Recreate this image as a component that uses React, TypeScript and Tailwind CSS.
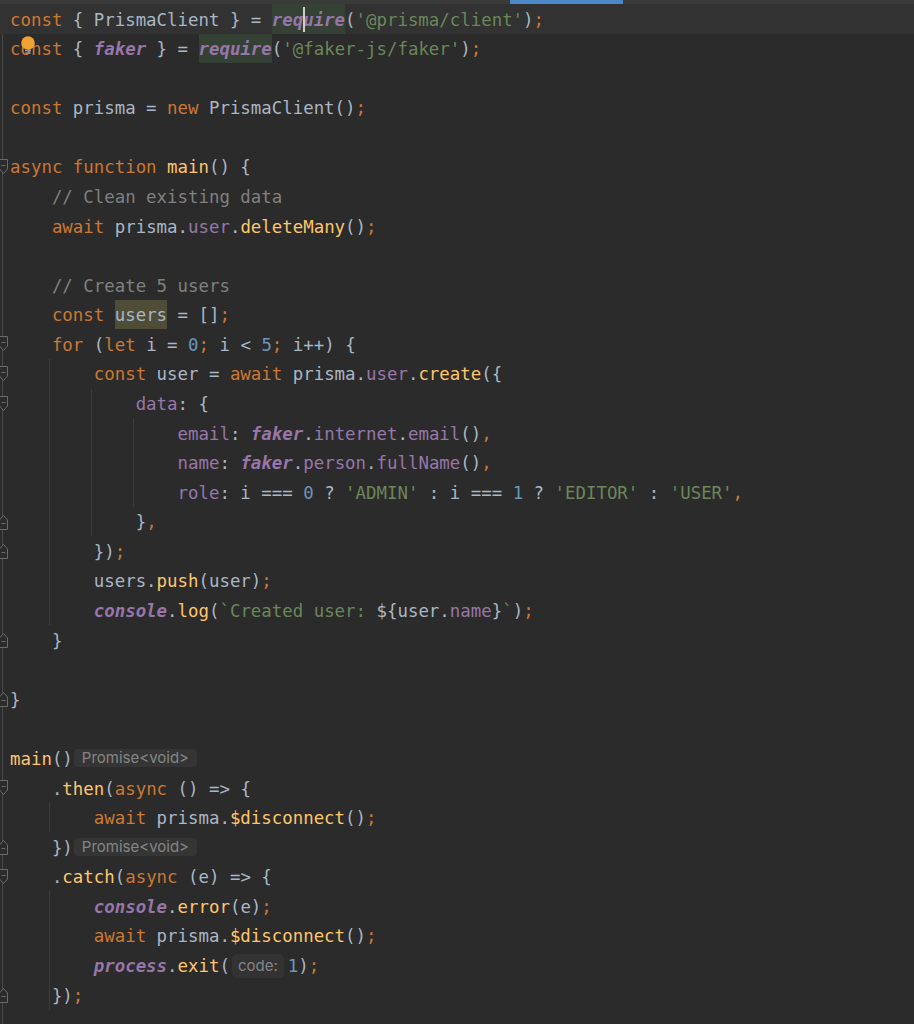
import React from "react";

type Tok = [string, string];

const K = "text-[#cc7832]";
const D = "text-[#a9b7c6]";
const S = "text-[#6a8759]";
const N = "text-[#6897bb]";
const P = "text-[#9876aa]";
const F = "text-[#ffc66d]";
const C = "text-[#808080]";
const PI = "text-[#9876aa] italic font-bold";
const REQ = "REQ";
const USR = "USR";
const HINT = "HINT";
const HINT2 = "HINT2";

const lines: Tok[][] = [
  [[ "const", K ], [" { PrismaClient } = ", D], ["require", REQ], ["(", D], ["'@prisma/client'", S], [")", D], [";", K]],
  [[ "const", K ], [" { ", D], ["faker", PI], [" } = ", D], ["require", REQ], ["(", D], ["'@faker-js/faker'", S], [")", D], [";", K]],
  [],
  [[ "const", K ], [" prisma = ", D], ["new", K], [" PrismaClient()", D], [";", K]],
  [],
  [["async function ", K], ["main", F], ["() {", D]],
  [["    // Clean existing data", C]],
  [["    ", D], ["await", K], [" prisma.", D], ["user", P], [".", D], ["deleteMany", F], ["()", D], [";", K]],
  [],
  [["    // Create 5 users", C]],
  [["    ", D], ["const", K], [" ", D], ["users", USR], [" = []", D], [";", K]],
  [["    ", D], ["for", K], [" (", D], ["let", K], [" i = ", D], ["0", N], [";", K], [" i < ", D], ["5", N], [";", K], [" i++) {", D]],
  [["        ", D], ["const", K], [" user = ", D], ["await", K], [" prisma.", D], ["user", P], [".", D], ["create", F], ["({", D]],
  [["            ", D], ["data", P], [": {", D]],
  [["                ", D], ["email", P], [": ", D], ["faker", PI], [".", D], ["internet", P], [".", D], ["email", P], ["()", D], [",", K]],
  [["                ", D], ["name", P], [": ", D], ["faker", PI], [".", D], ["person", P], [".", D], ["fullName", P], ["()", D], [",", K]],
  [["                ", D], ["role", P], [": i === ", D], ["0", N], [" ? ", D], ["'ADMIN'", S], [" : i === ", D], ["1", N], [" ? ", D], ["'EDITOR'", S], [" : ", D], ["'USER'", S], [",", K]],
  [["            }", D], [",", K]],
  [["        })", D], [";", K]],
  [["        users.", D], ["push", F], ["(user)", D], [";", K]],
  [["        ", D], ["console", PI], [".", D], ["log", F], ["(", D], ["`Created user: ", S], ["${user.", D], ["name", P], ["}", D], ["`", S], [")", D], [";", K]],
  [["    }", D]],
  [],
  [["}", D]],
  [],
  [["main", F], ["()", D], ["Promise<void>", HINT]],
  [["    .", D], ["then", F], ["(", D], ["async", K], [" () => {", D]],
  [["        ", D], ["await", K], [" prisma.", D], ["$disconnect", F], ["()", D], [";", K]],
  [["    })", D], ["Promise<void>", HINT]],
  [["    .", D], ["catch", F], ["(", D], ["async", K], [" (e) => {", D]],
  [["        ", D], ["console", PI], [".", D], ["error", F], ["(e)", D], [";", K]],
  [["        ", D], ["await", K], [" prisma.", D], ["$disconnect", F], ["()", D], [";", K]],
  [["        ", D], ["process", PI], [".", D], ["exit", F], ["(", D], ["code:", HINT2], ["1", N], [")", D], [";", K]],
  [["    })", D], [";", K]],
];

const openFold = new Set([6, 12, 13, 14, 27, 30]);
const closeFold = new Set([18, 19, 22, 24, 29, 34]);

function guidesFor(n: number): number[] {
  const g: number[] = [];
  if ((n >= 13 && n <= 21) || n === 28 || (n >= 31 && n <= 34)) g.push(49);
  if (n >= 14 && n <= 18) g.push(91);
  if (n >= 15 && n <= 17) g.push(133);
  return g;
}

function Token({ t }: { t: Tok }) {
  const [text, cls] = t;
  if (cls === REQ) {
    return (
      <span className="inline-block bg-[#344134] text-[#9876aa] italic font-bold">
        <span className="relative top-[1.5px]">{text}</span>
      </span>
    );
  }
  if (cls === USR) {
    return (
      <span className="inline-block bg-[#4f4c38] text-[#a9b7c6]">
        <span className="relative top-[1.5px]">{text}</span>
      </span>
    );
  }
  if (cls === HINT) {
    return (
      <span className="inline-block align-middle ml-[1px] h-[18px] leading-[18px] px-[8px] rounded-[4px] bg-[#353535] text-[#858585] text-[15px] font-['Inter',sans-serif]">
        {text}
      </span>
    );
  }
  if (cls === HINT2) {
    return (
      <span className="inline-block align-middle ml-[2px] mr-[4px] h-[24px] leading-[24px] px-[6px] rounded-[5px] bg-[#333333] text-[#858585] text-[15px] font-['Inter',sans-serif]">
        {text}
      </span>
    );
  }
  return <span className={`${cls} relative top-[1.5px]`}>{text}</span>;
}

function FoldOpen() {
  return (
    <svg className="absolute left-[-2px] top-[7px]" width="10" height="16" viewBox="0 0 10 16">
      <path d="M1.5 0.5 H9.5 V10 L5.5 14.5 L1.5 10 Z" fill="#2b2b2b" stroke="#6b6b6b" strokeWidth="1" />
      <path d="M3.5 6.5 H7.5" stroke="#6b6b6b" strokeWidth="1" />
    </svg>
  );
}

function FoldClose() {
  return (
    <svg className="absolute left-[-2px] top-[7px]" width="10" height="16" viewBox="0 0 10 16">
      <path d="M1.5 15.5 H9.5 V6 L5.5 1.5 L1.5 6 Z" fill="#2b2b2b" stroke="#6b6b6b" strokeWidth="1" />
      <path d="M3.5 9.5 H7.5" stroke="#6b6b6b" strokeWidth="1" />
    </svg>
  );
}

export default function App() {
  return (
    <div className="relative w-[914px] h-[1024px] overflow-hidden bg-[#2b2b2b] font-['DejaVu_Sans_Mono',monospace] text-[17.4px]">
      <div className="h-[4px] bg-[#3a3a3a] flex">
        <div className="w-[510px]" />
        <div className="w-[113px] bg-[#4a88c7]" />
      </div>
      <div className="absolute left-[2px] top-[4px] bottom-0 w-px bg-[#4a4a4a]" />
      <div className="flex flex-col">
        {lines.map((toks, i) => {
          const n = i + 1;
          return (
            <div
              key={n}
              className={`relative h-[29.58px] leading-[29.58px] pl-[10px] whitespace-pre ${n === 1 ? "bg-[#323232]" : ""}`}
            >
              {guidesFor(n).map((x) => (
                <div key={x} className="absolute top-0 bottom-0 w-px bg-[#3c3c3c]" style={{ left: x }} />
              ))}
              {openFold.has(n) && <FoldOpen />}
              {closeFold.has(n) && <FoldClose />}
              {toks.map((t, j) => (
                <Token key={j} t={t} />
              ))}
              {n === 1 && <div className="absolute left-[303px] top-[3px] h-[25px] w-[2px] bg-[#cfcfcf]" />}
              {n === 2 && (
                <svg className="absolute left-[20px] top-[0px]" width="16" height="22" viewBox="0 0 16 22">
                  <circle cx="8" cy="9" r="6.8" fill="#f2a230" />
                  <path d="M5 16.5 H11 M5.5 19 H10.5" stroke="#9a9a9a" strokeWidth="1.4" />
                </svg>
              )}
            </div>
          );
        })}
      </div>
    </div>
  );
}
